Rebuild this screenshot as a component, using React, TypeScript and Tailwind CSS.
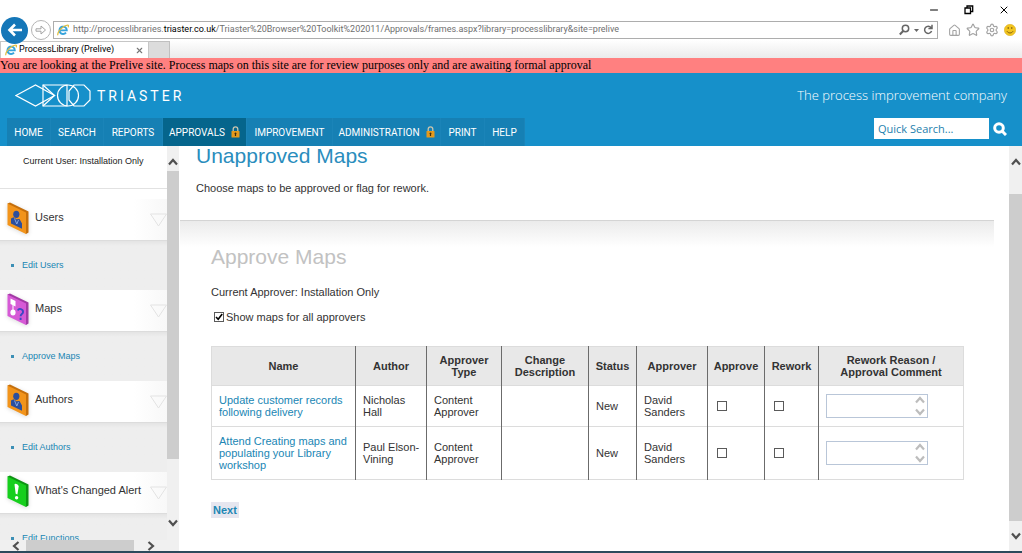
import { type ReactNode } from "react";
import { Home, Minus, Settings, Star, X } from "lucide-react";

interface NavItem {
  label: string;
  width: string;
  locked?: boolean;
  active?: boolean;
}

interface MapRow {
  id: string;
  name: string;
  author: string;
  type: string;
  status: string;
  approver: string;
}

const navItems: NavItem[] = [
  { label: "HOME", width: "w-[44px]" },
  { label: "SEARCH", width: "w-[53px]" },
  { label: "REPORTS", width: "w-[59px]" },
  { label: "APPROVALS", width: "w-[84px]", locked: true, active: true },
  { label: "IMPROVEMENT", width: "w-[86px]" },
  { label: "ADMINISTRATION", width: "w-[108px]", locked: true },
  { label: "PRINT", width: "w-[44px]" },
  { label: "HELP", width: "w-[40px]" },
];

const columns = [
  { label: "Name", width: "w-[144px]" },
  { label: "Author", width: "w-[71px]" },
  { label: "Approver Type", width: "w-[75px]" },
  { label: "Change Description", width: "w-[87px]" },
  { label: "Status", width: "w-[48px]" },
  { label: "Approver", width: "w-[71px]" },
  { label: "Approve", width: "w-[57px]" },
  { label: "Rework", width: "w-[54px]" },
  { label: "Rework Reason / Approval Comment", width: "w-auto" },
];

const rows: MapRow[] = [
  {
    id: "update-records",
    name: "Update customer records following delivery",
    author: "Nicholas Hall",
    type: "Content Approver",
    status: "New",
    approver: "David Sanders",
  },
  {
    id: "attend-workshop",
    name: "Attend Creating maps and populating your Library workshop",
    author: "Paul Elson-Vining",
    type: "Content Approver",
    status: "New",
    approver: "David Sanders",
  },
];

const arrowPaths = {
  up: "M1 7.500 5 3l4 4.500",
  down: "M1 2.500 5 7l4-4.500",
  left: "M7.500 1 3 5l4.500 4",
  right: "M2.500 1 7 5 2.500 9",
};

function Arrow({ direction, className = "" }: { direction: keyof typeof arrowPaths; className?: string }) {
  return (
    <svg
      viewBox="0 0 10 10"
      className={`size-[10px] shrink-0 ${className}`}
      fill="none"
      stroke="currentColor"
      strokeWidth="2.200"
      aria-hidden="true"
    >
      <path d={arrowPaths[direction]} />
    </svg>
  );
}

function BrowserIcon() {
  return (
    <svg viewBox="0 0 12 12" className="size-3 shrink-0" aria-hidden="true">
      <path d="M2.600 6.400h7.200A3.700 3.700 0 1 0 9 8.600" fill="none" stroke="#35a3dc" strokeWidth="1.900" />
      <path d="M1 11.200C-.4 9 5.600 1.400 10.800 1c1 .2.800 1.400.200 2.400" fill="none" stroke="#e0bd3c" strokeWidth="1.200" />
    </svg>
  );
}

function Lock() {
  return (
    <svg viewBox="0 0 9 12" className="h-3 w-[9px] shrink-0" aria-hidden="true">
      <path d="M2.200 6V3.200a2.300 2.300 0 0 1 4.600 0V6" fill="none" stroke="#c9c4ae" strokeWidth="1.300" />
      <rect x=".5" y="5" width="8" height="6.500" rx=".6" fill="#e59a1c" />
      <path d="M4.500 6.500a1 1 0 0 1 .6 1.800V10H3.900V8.300a1 1 0 0 1 .6-1.800z" fill="#3f2a08" />
    </svg>
  );
}

function BrowserChrome() {
  return (
    <div className="shrink-0 bg-white font-[Roboto,'Noto_Sans',sans-serif]">
      <div className="flex h-5 items-center justify-end gap-6 pr-3 text-black">
        <button aria-label="Minimise">
          <Minus className="size-3" strokeWidth={2} />
        </button>
        <button aria-label="Restore">
          <svg viewBox="0 0 10 10" className="size-[10px]" fill="none" stroke="currentColor" strokeWidth="1.300">
            <path d="M1 3h5.500v5.500H1zM3 3V1h5.700v5.500H6.500" />
          </svg>
        </button>
        <button aria-label="Close">
          <X className="size-3" strokeWidth={2} />
        </button>
      </div>
      <div className="flex h-5 items-center">
        <button aria-label="Back" className="relative z-10 ml-px flex size-[27px] shrink-0 items-center justify-center rounded-full bg-[#1577b8]">
          <svg viewBox="0 0 16 16" className="size-4" fill="none" stroke="white" strokeWidth="2.600">
            <path d="M15 8H2.500M8 2.500 2.500 8 8 13.500" />
          </svg>
        </button>
        <button aria-label="Forward" className="ml-[3px] flex size-5 shrink-0 items-center justify-center rounded-full border border-[#b5b5b5]">
          <svg viewBox="0 0 12 12" className="size-3" fill="none" stroke="#a3a3a3" strokeWidth="1">
            <path d="M1 4.800h5V2l4.500 4L6 10V7.200H1z" />
          </svg>
        </button>
        <div className="ml-0.5 flex h-[18px] min-w-0 flex-1 items-center border border-[#adadad] pr-1 pl-[3px]">
          <BrowserIcon />
          <p className="ml-1 flex-1 truncate text-[9px] text-[#6f6f6f]">
            http://processlibraries.<span className="text-black">triaster.co.uk</span>
            /Triaster%20Browser%20Toolkit%202011/Approvals/frames.aspx?library=processlibrary&amp;site=prelive
          </p>
          <svg viewBox="0 0 34 12" className="h-3 w-[34px] shrink-0" fill="none" stroke="#666" strokeWidth="1.500">
            <circle cx="6.500" cy="4.500" r="3.200" />
            <path d="M4.200 7 .8 10.500" strokeWidth="2" />
            <path d="M15 5h5l-2.500 3z" fill="#666" stroke="none" />
            <path d="M32 3.500a3.600 3.600 0 1 0 .6 3.500M33 .8v3.600h-3.600" />
          </svg>
        </div>
        <div className="flex shrink-0 items-center gap-[5px] pr-[6px] pl-[10px] text-[#a3a3a3]">
          <Home className="size-[13px]" strokeWidth={2} />
          <Star className="size-[14px]" strokeWidth={2} />
          <Settings className="size-[14px]" strokeWidth={2} />
          <svg viewBox="0 0 12 12" className="size-3">
            <circle cx="6" cy="6" r="5.700" fill="#f2c51f" stroke="#d8a81a" strokeWidth=".5" />
            <path d="M4.200 3v2M7.800 3v2M3 7.300c1.400 2.200 4.600 2.200 6 0" fill="none" stroke="#7d5c10" />
          </svg>
        </div>
      </div>
      <div className="flex h-[18px] items-end bg-linear-to-b from-white to-[#ebebeb]">
        <div className="flex h-[17px] w-[149px] items-center border-x border-t border-[#c6c6c6] bg-white pr-1 pl-1 text-[9px] text-black">
          <BrowserIcon />
          <span className="ml-0.5 flex-1">ProcessLibrary (Prelive)</span>
          <button aria-label="Close tab">
            <X className="size-[9px] text-[#777]" strokeWidth={3} />
          </button>
        </div>
        <div className="h-[17px] w-[21px] border-t border-r border-[#c0c0c0] bg-[#dcdcdc]" />
      </div>
    </div>
  );
}

function Logo() {
  return (
    <div className="flex items-center gap-[6px] text-white">
      <svg viewBox="0 0 76 23" className="h-[23px] w-[76px]" fill="none" stroke="currentColor" strokeWidth="1.200">
        <path d="M1 11.500 20.500 1 39.500 11.500 20.500 22z" />
        <path d="M28 1h24v21H28z" />
        <path d="M28 1l11.500 10.500L28 22" />
        <circle cx="53" cy="11.500" r="10.500" />
        <path d="M59 1h10l6 6v9l-6 6H59l-5-6V7z" />
      </svg>
      <span className="font-[Roboto,sans-serif] text-sm tracking-[3px]">TRIASTER</span>
    </div>
  );
}

function SiteHeader() {
  return (
    <header className="shrink-0 bg-[#1690ca] font-['Open_Sans','Noto_Sans',sans-serif] text-white">
      <div className="flex h-[45px] items-center justify-between px-[15px]">
        <Logo />
        <p className="text-[13px] font-light">The process improvement company</p>
      </div>
      <div className="flex h-7 items-stretch justify-between pr-[15px] pl-[7px]">
        <nav className="flex font-[Roboto,sans-serif] text-[10px]">
          {navItems.map((item) => (
            <a
              key={item.label}
              href="#"
              className={`flex items-center justify-center gap-1.5 border-r border-[#1b84b8] ${item.width} ${
                item.active ? "bg-[#05658c]" : "bg-[#1680b4]"
              }`}
            >
              {item.label}
              {item.locked && <Lock />}
            </a>
          ))}
        </nav>
        <form className="flex items-start gap-1">
          <input
            type="text"
            aria-label="Quick search"
            placeholder="Quick Search..."
            className="h-[21px] w-[115px] bg-white px-1 text-[11px] text-[#1d7fae] placeholder:text-[#1d7fae] placeholder:opacity-100"
          />
          <button type="button" aria-label="Search" className="mt-1">
            <svg viewBox="0 0 14 14" className="size-[14px]" fill="none" stroke="white">
              <circle cx="6" cy="6" r="4.300" strokeWidth="3" />
              <path d="m9.500 9.500 3.500 3.500" strokeWidth="3" />
            </svg>
          </button>
        </form>
      </div>
    </header>
  );
}

function Tile({ face, edge, children }: { face: string; edge: string; children: ReactNode }) {
  return (
    <svg viewBox="0 0 22 33" className="h-[33px] w-[22px] shrink-0 drop-shadow-sm" aria-hidden="true">
      <path d="M.5 1.500 3 .5 21.500 9.500V30.500L19 32z" fill={edge} />
      <path d="M.5 1.500 19 10.500V32L.5 23z" fill={face} />
      {children}
    </svg>
  );
}

function PersonTile() {
  return (
    <Tile face="#f2941b" edge="#c56f0c">
      <ellipse cx="9.300" cy="12.300" rx="3.100" ry="3.600" fill="#2c4f9e" />
      <path d="M4 21.500v-5l2.500-1.200 3 2 3-.2 2.500 4.400v5.200z" fill="#2c4f9e" />
      <path d="m7.500 16.500 2.300 5.500 1.700-4" fill="none" stroke="#8fb0e8" strokeWidth=".9" />
    </Tile>
  );
}

function MapTile() {
  return (
    <Tile face="#d65ad6" edge="#a23aa5">
      <path d="m3.500 5.500 5 2.500v5.500l-5-2.500z" fill="white" />
      <path d="M6 12v6" stroke="white" />
      <ellipse cx="6" cy="19.500" rx="2.600" ry="3" fill="white" />
      <path d="M11 17.500c.5-3 5.500-1.500 5 1.800-.3 2-2.500 1.700-2.400 4M13.600 24.800v2.200" fill="none" stroke="#3d49c4" strokeWidth="1.900" />
    </Tile>
  );
}

function AlertTile() {
  return (
    <Tile face="#16cf1d" edge="#0d9413">
      <path d="M7.500 9.500c0-1.800 4.200-.2 4.200 2l-1.300 8-1.700-.8z" fill="white" />
      <circle cx="9.600" cy="22.800" r="1.700" fill="white" />
    </Tile>
  );
}

const sections = [
  { title: "Users", link: "Edit Users", icon: <PersonTile /> },
  { title: "Maps", link: "Approve Maps", icon: <MapTile /> },
  { title: "Authors", link: "Edit Authors", icon: <PersonTile /> },
  { title: "What's Changed Alert", link: "Edit Functions", icon: <AlertTile /> },
];

function Sidebar() {
  return (
    <aside className="flex w-[180px] shrink-0">
      <div className="flex min-w-0 flex-1 flex-col">
        <div className="min-h-0 flex-1 overflow-hidden">
          <p className="h-[43px] border-b border-[#e2e2e2] pt-2 pl-[23px] text-[9px] leading-[14px] text-[#222]">
            Current User: Installation Only
          </p>
          <div className="pt-[10px]">
            {sections.map((section) => (
              <section key={section.title}>
                <div className="flex h-[41px] items-start bg-linear-to-r from-white from-80% to-[#f8f8f8] pt-[3px] pl-[7px]">
                  {section.icon}
                  <h2 className="ml-[6px] flex-1 pt-1.5 text-[11px] leading-[18px] whitespace-nowrap text-[#333]">
                    {section.title}
                  </h2>
                  <svg viewBox="0 0 17 14" className="mt-[11px] h-[14px] w-[17px] shrink-0" fill="none" stroke="#e3e3e3">
                    <path d="M.5 1h16l-8 12z" />
                  </svg>
                </div>
                <ul className="flex h-[50px] items-center border-t border-[#dcdcdc] bg-linear-to-b from-[#e4e4e4] to-[#eeeeee] to-10% pl-[11px]">
                  <li className="flex items-center gap-2">
                    <span className="size-[3px] bg-[#3c8fb5]" />
                    <a href="#" className="text-[9px] text-[#2086b4]">
                      {section.link}
                    </a>
                  </li>
                </ul>
              </section>
            ))}
          </div>
        </div>
        <div className="flex h-[11px] shrink-0 items-center bg-[#f0f0f0] pl-[11px] text-[#505050]">
          <Arrow direction="left" />
          <div className="ml-[5px] h-full w-[108px] bg-[#cdcdcd]" />
          <Arrow direction="right" className="ml-[12px]" />
        </div>
      </div>
      <div className="flex w-3 shrink-0 flex-col items-center bg-[#f0f0f0] text-[#505050]">
        <Arrow direction="up" className="mt-[11px] mb-1" />
        <div className="w-full flex-287 bg-[#cdcdcd]" />
        <div className="flex-59" />
        <Arrow direction="down" className="mb-[23px]" />
      </div>
      <div className="w-px shrink-0 bg-white" />
    </aside>
  );
}

function Box({ label }: { label: string }) {
  return (
    <input
      type="checkbox"
      aria-label={label}
      className="mx-0.5 block size-[10px] appearance-none border border-[#5a5a5a] bg-white"
    />
  );
}

function ApprovalTable() {
  return (
    <table className="w-full table-fixed border-collapse border border-[#dcdcdc] text-[11px] leading-3 text-[#333]">
      <thead>
        <tr className="h-[39px] border-b border-[#dcdcdc] bg-[#e8e8e8]">
          {columns.map((column) => (
            <th key={column.label} className={`border-r border-r-[#6b6b6b] px-1 last:border-r-[#dcdcdc] last:px-5 ${column.width}`}>
              {column.label}
            </th>
          ))}
        </tr>
      </thead>
      <tbody>
        {rows.map((row) => (
          <tr
            key={row.id}
            className="border-b border-[#dcdcdc] [&>td]:border-r [&>td]:border-r-[#6b6b6b] [&>td]:py-2 [&>td]:pr-1 [&>td]:pl-[7px] [&>td:last-child]:border-r-[#dcdcdc]"
          >
            <td>
              <a href="#" className="text-[#2086b4]">
                {row.name}
              </a>
            </td>
            <td>{row.author}</td>
            <td>{row.type}</td>
            <td />
            <td>{row.status}</td>
            <td>{row.approver}</td>
            <td>
              <Box label={`Approve ${row.name}`} />
            </td>
            <td>
              <Box label={`Rework ${row.name}`} />
            </td>
            <td>
              <div className="flex h-6 w-[102px] border border-[#b9c6d8]">
                <textarea aria-label={`Comment on ${row.name}`} className="min-w-0 flex-1 resize-none overflow-hidden" />
                <div className="flex w-[14px] flex-col items-center justify-between text-[#bdbdbd]">
                  <Arrow direction="up" />
                  <Arrow direction="down" />
                </div>
              </div>
            </td>
          </tr>
        ))}
      </tbody>
    </table>
  );
}

function MainPane() {
  return (
    <main className="flex min-w-0 flex-1">
      <div className="min-w-0 flex-1 pr-[15px]">
        <div className="h-[74px] pl-4 text-[#333]">
          <h1 className="text-[21px] leading-5 text-[#2a8dbd]">Unapproved Maps</h1>
          <p className="mt-[14px] text-[11px] leading-4">Choose maps to be approved or flag for rework.</p>
        </div>
        <div className="border-t border-[#d4d4d4] bg-linear-to-b from-[#ebebeb] to-white to-[26px] pt-[26px] pr-[30px] pl-[31px] text-[#333]">
          <h2 className="text-[21px] leading-5 text-[#c2c2c2]">Approve Maps</h2>
          <p className="mt-[17px] text-[11px] leading-4">Current Approver: Installation Only</p>
          <label className="mt-[9px] flex items-center pl-[3px] text-[11px] leading-4">
            <span className="relative mr-0.5 flex">
              <input
                type="checkbox"
                defaultChecked
                className="peer size-[10px] appearance-none border border-[#5a5a5a] bg-white"
              />
              <svg
                viewBox="0 0 10 10"
                className="pointer-events-none absolute inset-0 hidden size-[10px] peer-checked:block"
                fill="none"
                stroke="black"
                strokeWidth="1.600"
              >
                <path d="M2 5l2.200 2.300L8.200 2" />
              </svg>
            </span>
            Show maps for all approvers
          </label>
          <div className="mt-[21px]">
            <ApprovalTable />
          </div>
          <button className="mt-[22px] bg-[#e6e6ef] px-0.5 text-[11px] leading-4 font-bold text-[#2086b4]">Next</button>
        </div>
      </div>
      <div className="flex w-[13px] shrink-0 flex-col items-center bg-[#f0f0f0] text-[#505050]">
        <Arrow direction="up" className="mt-[11px]" />
        <div className="flex-27" />
        <div className="w-full flex-325 bg-[#cdcdcd]" />
        <Arrow direction="down" className="mt-[10px] mb-[10px]" />
      </div>
    </main>
  );
}

export default function App() {
  return (
    <div className="flex h-screen flex-col overflow-hidden border-b-2 border-[#2c4a5c] bg-white font-['Liberation_Sans',Arial,sans-serif]">
      <BrowserChrome />
      <p className="h-[15px] shrink-0 bg-[#ff8080] font-['Liberation_Serif','Times_New_Roman',serif] text-[12px] leading-[15px] whitespace-nowrap text-black">
        You are looking at the Prelive site. Process maps on this site are for review purposes only and are awaiting formal approval
      </p>
      <SiteHeader />
      <div className="flex min-h-0 flex-1">
        <Sidebar />
        <MainPane />
      </div>
    </div>
  );
}
